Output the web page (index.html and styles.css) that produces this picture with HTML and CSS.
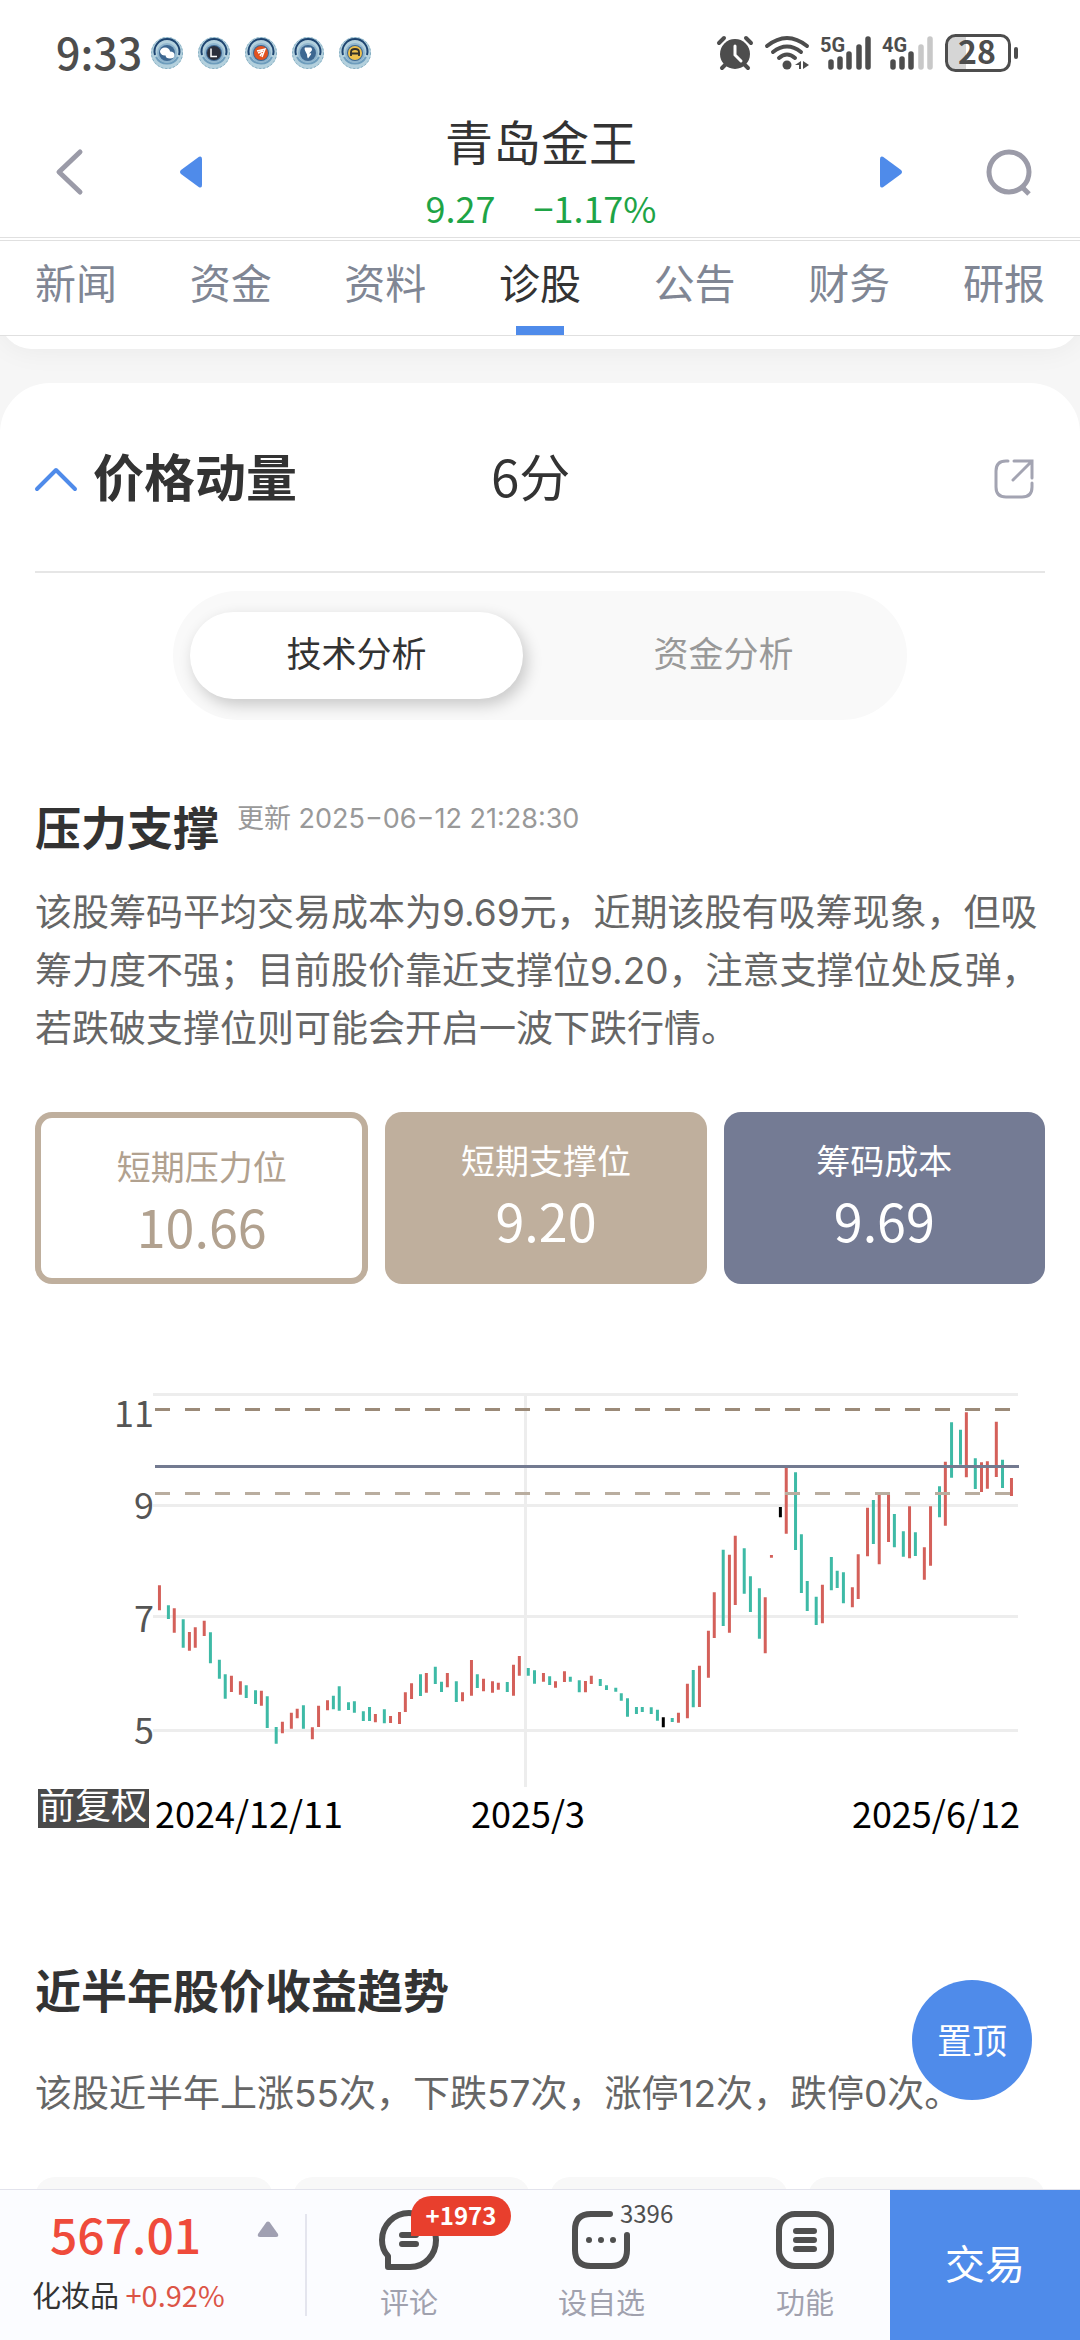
FILE: index.html
```html
<!DOCTYPE html>
<html lang="zh-CN">
<head>
    <meta charset="UTF-8">
    <meta name="viewport" content="width=device-width, initial-scale=1.0">
    <title>青岛金王 - 诊股</title>
    <link rel="stylesheet" href="styles.css">
</head>
<body>

    <div class="status-bar">
        <span class="clock">9:33</span>
        <div class="notices">
            <svg class="notice" viewBox="0 0 34 34"><use href="#ring"/><ellipse cx="15" cy="15.500" rx="5" ry="4" fill="#fff"/><ellipse cx="20" cy="19" rx="4.500" ry="3.500" fill="#fff"/></svg>
            <svg class="notice" viewBox="0 0 34 34"><use href="#ring"/><circle cx="17" cy="17" r="7" fill="#2c2f3c"/><path d="M14 12.500V20.500H20" fill="none" stroke="#fff" stroke-width="1.500"/></svg>
            <svg class="notice" viewBox="0 0 34 34"><use href="#ring"/><circle cx="17" cy="17" r="7" fill="#e2521f"/><path d="M13 15L21 13L18 21M14 17L19 15M16 20L18 17" fill="none" stroke="#fff" stroke-width="1.500"/></svg>
            <svg class="notice" viewBox="0 0 34 34"><use href="#ring"/><path d="M14 11.500h6q2 2 0 4l-2 2q3-1 2 1l-3 4q-1-1-1-4l-2-4q-1-2 0-3z" fill="#fff"/></svg>
            <svg class="notice" viewBox="0 0 34 34"><use href="#ring"/><circle cx="17" cy="17" r="7" fill="#efc04c"/><path d="M13 20v-4q0-3 4-3t4 3v4M12 17.500h10" fill="none" stroke="#33302a" stroke-width="1.800"/></svg>
        </div>
        <div class="signals">
            <svg width="36" height="34" viewBox="0 0 36 34">
                <circle cx="18" cy="18" r="15" fill="#4d4d4d"/>
                <path d="M2 7L7 2M34 7L29 2M8 29L5 32M28 29L31 32" stroke="#4d4d4d" stroke-width="4" stroke-linecap="round"/>
                <path d="M18 10V19L24 25" fill="none" stroke="#fff" stroke-width="3" stroke-linecap="round"/>
            </svg>
            <svg width="44" height="34" viewBox="0 0 44 34">
                <g fill="none" stroke="#4d4d4d" stroke-width="4" stroke-linecap="round">
                    <path d="M2 10Q22-6 42 10M8 16Q22 5 36 16M14 22Q22 15 30 22"/>
                </g>
                <circle cx="22" cy="29" r="4.500" fill="#4d4d4d"/>
                <path d="M30 29L36 25V33H34V29ZM38 25L44 29L38 33Z" fill="#4d4d4d"/>
            </svg>
            <svg width="50" height="34" viewBox="0 0 50 34">
                <text x="-1" y="16" class="net">5G</text>
                <path d="M10 26V31M19 23V31M28 18V31M38 11V31M47 3V31" stroke="#4d4d4d" stroke-width="5.500" stroke-linecap="round"/>
            </svg>
            <svg width="50" height="34" viewBox="0 0 50 34">
                <text x="-1" y="16" class="net">4G</text>
                <path d="M10 26V31M19 23V31M28 18V31" stroke="#4d4d4d" stroke-width="5.500" stroke-linecap="round"/>
                <path d="M38 11V31M47 3V31" stroke="#c8c8c8" stroke-width="5.500" stroke-linecap="round"/>
            </svg>
            <svg width="74" height="38" viewBox="0 0 74 38">
                <path d="M10 2H21V36H10Q2 36 2 28V10Q2 2 10 2Z" fill="#d6d6d6"/>
                <rect x="1.500" y="1.500" width="63" height="35" rx="9" fill="none" stroke="#4d4d4d" stroke-width="3"/>
                <path d="M71 15V23" stroke="#4d4d4d" stroke-width="4" stroke-linecap="round"/>
                <text x="32" y="30" class="battery">28</text>
            </svg>
        </div>
    </div>

    <header class="stock-head">
        <button class="icon-btn back" aria-label="返回">
            <svg width="28" height="46" viewBox="0 0 28 46"><path d="M24 3L3 23L24 43" fill="none" stroke="#9b9ba8" stroke-width="5" stroke-linecap="round" stroke-linejoin="round"/></svg>
        </button>
        <button class="icon-btn" aria-label="上一只">
            <svg width="22" height="32" viewBox="0 0 22 32"><path d="M1 14L19 .8Q22-.5 22 3V29Q22 32.500 19 31.200L1 18Q-1 16 1 14Z" fill="#4f8bea"/></svg>
        </button>
        <div class="stock">
            <h1>青岛金王</h1>
            <p class="quote"><span>9.27</span><span>−1.17%</span></p>
        </div>
        <button class="icon-btn" aria-label="下一只">
            <svg width="22" height="32" viewBox="0 0 22 32"><path d="M21 14L3 .8Q0-.5 0 3V29Q0 32.500 3 31.200L21 18Q23 16 21 14Z" fill="#4f8bea"/></svg>
        </button>
        <button class="icon-btn search" aria-label="搜索">
            <svg width="46" height="46" viewBox="0 0 46 46"><path d="M35.500 37.500L43 45" stroke="#9b9ba8" stroke-width="5"/><circle cx="23" cy="23" r="20" fill="none" stroke="#9b9ba8" stroke-width="5"/></svg>
        </button>
    </header>

    <nav class="tabs">
        <a href="#">新闻</a>
        <a href="#">资金</a>
        <a href="#">资料</a>
        <a href="#" class="active">诊股</a>
        <a href="#">公告</a>
        <a href="#">财务</a>
        <a href="#">研报</a>
    </nav>

    <main>
        <div class="prev-card"></div>
        <section class="card">
            <div class="card-head">
                <svg width="42" height="24" viewBox="0 0 42 24"><path d="M2 22L21 3L40 22" fill="none" stroke="#4f8bea" stroke-width="4" stroke-linecap="round" stroke-linejoin="round"/></svg>
                <h2>价格动量</h2>
                <span class="score">6分</span>
                <button class="icon-btn" aria-label="分享">
                    <svg width="40" height="40" viewBox="0 0 40 40"><path d="M14 2H12Q2 2 2 12V28Q2 38 12 38H28Q38 38 38 28V24M20 2H38V19M38 2L19 21" fill="none" stroke="#a3a4b2" stroke-width="3" stroke-linecap="round"/></svg>
                </button>
            </div>

            <div class="switch">
                <button class="on">技术分析</button>
                <button>资金分析</button>
            </div>

            <div class="section-title">
                <h3>压力支撑</h3>
                <span class="updated">更新 2025−06−12 21:28:30</span>
            </div>
            <p class="desc">该股筹码平均交易成本为9.69元，近期该股有吸筹现象，但吸筹力度不强；目前股价靠近支撑位9.20，注意支撑位处反弹，若跌破支撑位则可能会开启一波下跌行情。</p>

            <div class="levels">
                <div class="level pressure"><span>短期压力位</span><b>10.66</b></div>
                <div class="level support"><span>短期支撑位</span><b>9.20</b></div>
                <div class="level cost"><span>筹码成本</span><b>9.69</b></div>
            </div>

            <svg class="chart" viewBox="0 0 1080 513">
                <g stroke="#ededed" stroke-width="3">
                    <path d="M153 24.500H1018M153 135.500H1018M153 246.500H1018M153 360.500H1018M525.500 24V417"/>
                </g>
                <!-- daily high/low bars -->
                <g transform="scale(.34439 .33333)" stroke-width="8.700">
                    <path class="down" d="M489 706V747M532 748V833M611 787V880M637 869V926M654 913V986M715 946V984M742 961V1002M776 979V1074M802 1071V1121M881 1006V1076M968 977V1018M985 949V1022M1012 997V1020M1029 994V1028M1055 1024V1053M1073 1011V1053M1116 1018V1060M1221 913V978M1264 890V942M1282 935V966M1325 934V996M1386 913V954M1473 936V966M1534 894V917M1552 901V941M1596 919V945M1656 920V935M1682 931V967M1743 927V948M1761 946V960M1788 953V965M1804 970V992M1822 985V1040M1848 1011V1032M1865 1011V1026M1891 1012V1032M1909 1019V1052M1952 1044V1056M2013 900V1012M2100 539V768M2161 535V671M2179 619V726M2205 655V806M2310 307V540M2327 493V669M2344 633V723M2370 680V765M2414 561V661M2431 602V654M2449 607V700M2536 390V522M2597 432V532M2623 484V560M2658 487V558M2728 349V442M2763 157V323M2789 179V284M2832 265V357M2911 269V354"/>
                    <path class="up" d="M463 646V721M506 715V788M550 786V842M567 772V833M593 752V798M672 917V966M698 934V974M759 962V1007M820 1055V1090M846 1028V1076M863 1016V1045M907 1072V1108M925 1007V1071M951 991V1021M1090 1032V1057M1134 1038V1059M1160 1026V1062M1177 967V1026M1195 940V987M1238 909V968M1299 909V952M1343 967V994M1369 870V977M1404 926V964M1430 934V968M1447 938V959M1491 884V977M1508 858V917M1578 909V935M1613 934V953M1639 904V936M1700 933V967M1717 917V942M1970 1028V1058M1996 941V1045M2031 887V1011M2057 782V923M2074 667V804M2118 554V788M2135 497V705M2222 682V850M2240 555V563M2283 294V491M2388 644V760M2475 652V712M2492 553V687M2519 413V559M2553 374V583M2580 372V516M2641 409V565M2684 532V629M2702 409V587M2745 275V467M2806 127V322M2850 277V366M2867 274V356M2893 155V321M2937 324V378"/>
                    <path class="flat" d="M1926 1042V1072M2266 411V442"/>
                </g>
                <path d="M155 39.500H1019" stroke="#9b8a78" stroke-width="3" stroke-dasharray="15 15"/>
                <path d="M155 123.500H1019" stroke="#b9ad9f" stroke-width="3" stroke-dasharray="15 15"/>
                <path d="M155 96.500H1019" stroke="#737a90" stroke-width="3"/>
                <g class="axis-y">
                    <text x="154" y="57">11</text>
                    <text x="154" y="149">9</text>
                    <text x="154" y="262">7</text>
                    <text x="154" y="374">5</text>
                </g>
                <g class="axis-x">
                    <text x="155" y="458">2024/12/11</text>
                    <text x="528" y="458" text-anchor="middle">2025/3</text>
                    <text x="1020" y="458" text-anchor="end">2025/6/12</text>
                </g>
                <rect x="38" y="419" width="111" height="39" fill="#4a4a4a"/>
                <text x="39" y="449" class="adjust">前复权</text>
            </svg>

            <div class="section-title">
                <h3>近半年股价收益趋势</h3>
            </div>
            <p class="desc trend">该股近半年上涨55次，下跌57次，涨停12次，跌停0次。</p>
            <div class="stats"><i></i><i></i><i></i><i></i></div>
        </section>
        <button class="to-top">置顶</button>
    </main>

    <footer class="bottom-bar">
        <div class="sector">
            <div class="sector-index">567.01
                <svg width="22" height="16" viewBox="0 0 22 16"><path d="M9.500 1Q11 0 12.500 1L21 13Q22 16 19 16H3Q0 16 1 13Z" fill="#a0a0b2"/></svg>
            </div>
            <div class="sector-name">化妆品 <span>+0.92%</span></div>
        </div>
        <div class="actions">
            <button>
                <svg width="60" height="60" viewBox="0 0 60 60"><path d="M9 57H31C46 57 57 45 57 30C57 15 45 3 30 3S3 15 3 30C3 37 6 43 9 46Z" fill="none" stroke="#4f4f4f" stroke-width="6" stroke-linejoin="round"/><path d="M23 25H37M23 34H37" stroke="#4f4f4f" stroke-width="6" stroke-linecap="round"/></svg>
                评论
                <span class="badge">+1973</span>
            </button>
            <button class="watch">
                <svg width="58" height="60" viewBox="0 0 58 60"><path d="M38 4H19Q3 4 3 20V40Q3 56 19 56H39Q55 56 55 40V25" fill="none" stroke="#4f4f4f" stroke-width="6" stroke-linecap="round"/><g fill="#4f4f4f"><circle cx="17" cy="30" r="3"/><circle cx="29" cy="30" r="3"/><circle cx="41" cy="30" r="3"/></g></svg>
                设自选
                <span class="count">3396</span>
            </button>
            <button>
                <svg width="58" height="60" viewBox="0 0 58 60"><rect x="3" y="4" width="52" height="52" rx="16" fill="none" stroke="#4f4f4f" stroke-width="6"/><path d="M20 21H38M20 30H38M20 39H38" stroke="#4f4f4f" stroke-width="6" stroke-linecap="round"/></svg>
                功能
            </button>
        </div>
        <button class="trade">交易</button>
    </footer>

    <!-- shared ring for the notification icons -->
    <svg class="defs">
        <symbol id="ring" viewBox="0 0 34 34">
            <circle cx="17" cy="17" r="16" fill="#b3d0dd"/>
            <circle cx="17" cy="17" r="15.500" fill="none" stroke="#83adc2" stroke-width="1" stroke-dasharray="2 2"/>
            <path d="M5 19A12.500 12.500 0 1 1 29 19" fill="none" stroke="#1d4470" stroke-width="2"/>
            <path d="M6 21A12.500 12.500 0 0 0 28 21" fill="none" stroke="#6d9cbc" stroke-width="2"/>
            <circle cx="17" cy="17" r="10" fill="#8fb5ce"/>
            <circle cx="17" cy="17" r="8" fill="#3d6791"/>
        </symbol>
    </svg>

</body>
</html>
```

FILE: styles.css
```css
* {
    box-sizing: border-box;
    margin: 0;
    padding: 0;
}
body {
    height: 100vh;
    display: flex;
    flex-direction: column;
    overflow: hidden;
    background: #fff;
    color: #333;
    font-family: "Noto Sans CJK SC", sans-serif;
}
button {
    border: none;
    background: none;
    font-family: inherit;
    color: inherit;
    cursor: pointer;
}
a {
    color: inherit;
    text-decoration: none;
}
svg {
    display: block;
    overflow: visible;
}
.defs {
    position: absolute;
    width: 0;
    height: 0;
}

/* status bar */
.status-bar {
    display: flex;
    align-items: center;
    height: 106px;
    padding: 0 61px 0 56px;
    color: #4d4d4d;
}
.clock {
    font-size: 43px;
    font-weight: 500;
    line-height: 64px;
    width: 94px;
    padding-bottom: 4px;
}
.notices {
    display: flex;
    gap: 13px;
}
.notice {
    width: 34px;
    height: 34px;
}
.signals {
    display: flex;
    align-items: center;
    gap: 12px;
    margin-left: auto;
}
.net {
    font-family: Roboto, sans-serif;
    font-size: 20px;
    font-weight: 700;
    fill: #4d4d4d;
}
.battery {
    font-size: 32px;
    font-weight: 700;
    text-anchor: middle;
    fill: #4d4d4d;
}

/* stock header */
.stock-head {
    display: flex;
    align-items: center;
    height: 132px;
    padding: 0 48px 0 56px;
    border-bottom: 1px solid #e0e0e0;
}
.icon-btn {
    flex: none;
}
.back {
    margin-right: 96px;
}
.search {
    margin-left: 84px;
}
.stock {
    flex: 1;
    padding-bottom: 6px;
    text-align: center;
}
.stock h1 {
    font-size: 48px;
    font-weight: 400;
    line-height: 76px;
}
.quote {
    display: flex;
    justify-content: center;
    gap: 38px;
    font-size: 36px;
    line-height: 58px;
    color: #1ea446;
}

/* tabs */
.tabs {
    display: flex;
    justify-content: space-between;
    height: 96px;
    margin-top: 2px;
    padding: 0 35px;
    border-top: 1px solid #e0e0e0;
    border-bottom: 1px solid #e0e0e0;
    font-size: 41px;
    line-height: 80px;
    color: #808694;
}
.tabs .active {
    color: #333;
    background: linear-gradient(#4f8bea, #4f8bea) center bottom / 48px 9px no-repeat;
}

/* content */
main {
    flex: 1;
    position: relative;
    overflow: hidden;
    background: #f6f6f6;
}
.prev-card {
    height: 63px;
    margin-top: -50px;
    margin-bottom: 34px;
    background: #fff;
    border-radius: 50px;
    box-shadow: 0 0 30px rgba(0, 0, 0, 0.06);
}
.card {
    padding: 0 35px;
    background: #fff;
    border-radius: 50px 50px 0 0;
}
.card-head {
    display: grid;
    grid-template-columns: 58px 398px 1fr auto;
    align-items: center;
    height: 190px;
    padding: 4px 11px 0 0;
    border-bottom: 2px solid #e6e6e6;
}
.card-head h2,
.score {
    padding-bottom: 9px;
    font-size: 51px;
    line-height: 60px;
}
.switch {
    display: flex;
    gap: 34px;
    width: 734px;
    margin: 18px auto 0;
    padding: 21px 17px;
    border-radius: 65px;
    background: #f9f9f9;
}
.switch button {
    flex: 1;
    height: 87px;
    padding-bottom: 8px;
    border-radius: 44px;
    font-size: 35px;
    color: #999;
}
.switch .on {
    flex: 0 0 333px;
    background: #fff;
    color: #333;
    box-shadow: 4px 6px 16px rgba(0, 0, 0, 0.2);
}
.section-title {
    display: flex;
    gap: 18px;
    margin-top: 78px;
}
.section-title h3 {
    font-size: 46px;
    line-height: 54px;
}
.updated {
    font-family: Inter, "Noto Sans CJK SC", sans-serif;
    font-size: 27px;
    line-height: 42px;
    color: #999;
}
.desc {
    margin-top: 32px;
    font-family: Inter, "Noto Sans CJK SC", sans-serif;
    font-size: 37px;
    line-height: 58px;
    color: #666;
}
.trend {
    margin-top: 50px;
}
.levels {
    display: flex;
    gap: 17px;
    margin-top: 54px;
}
.level {
    box-sizing: content-box;
    flex: 1;
    display: flex;
    flex-direction: column;
    align-items: center;
    padding: 23px 0 17px;
    border-radius: 17px;
    color: #fff;
}
.level span {
    font-size: 34px;
    line-height: 50px;
}
.level b {
    font-size: 52px;
    font-weight: 400;
    line-height: 70px;
}
.pressure {
    border: 6px solid #bfaf9d;
    color: #b1a18f;
}
.support {
    background: #bfaf9d;
}
.cost {
    background: #747b94;
}

/* chart */
.chart {
    width: calc(100% + 70px);
    margin: 86px -35px 0;
}
.down {
    stroke: #3ebaa6;
}
.up {
    stroke: #d4605a;
}
.flat {
    stroke: #000;
}
.axis-y {
    font-size: 36px;
    text-anchor: end;
    fill: #555;
}
.axis-x {
    font-size: 36px;
    fill: #000;
}
.adjust {
    font-size: 36px;
    fill: #fff;
}

.stats {
    display: grid;
    grid-template-columns: repeat(4, 1fr);
    gap: 20px;
    margin-top: 54px;
}
.stats i {
    height: 130px;
    border-radius: 20px;
    background: #f8f8f8;
}
.to-top {
    position: absolute;
    right: 48px;
    bottom: 89px;
    width: 120px;
    height: 120px;
    padding-bottom: 4px;
    border-radius: 50%;
    background: #4f8bea;
    color: #fff;
    font-size: 35px;
}

/* bottom bar */
.bottom-bar {
    display: flex;
    height: 151px;
    border-top: 1px solid #e2e3ec;
    background: #fbfcff;
}
.sector {
    width: 307px;
    padding: 11px 0 0 32px;
    background: linear-gradient(#e4e5ee, #e4e5ee) right 24px / 2px 102px no-repeat;
}
.sector-index {
    display: flex;
    align-items: center;
    justify-content: space-between;
    padding: 0 28px 0 18px;
    font-size: 48px;
    font-weight: 500;
    line-height: 64px;
    color: #ef4b3b;
}
.sector-index svg {
    margin-bottom: 8px;
}
.sector-name {
    font-size: 29px;
    line-height: 58px;
}
.sector-name span {
    color: #dc5446;
}
.actions {
    flex: 1;
    display: flex;
    justify-content: space-between;
    padding: 0 56px 0 72px;
}
.actions button {
    position: relative;
    display: flex;
    flex-direction: column;
    align-items: center;
    padding-top: 20px;
    font-size: 29px;
    line-height: 62px;
    color: #a0a1ae;
}
.actions .watch {
    padding-right: 12px;
}
.badge {
    position: absolute;
    top: 6px;
    left: 32px;
    width: 100px;
    height: 40px;
    border-radius: 20px 20px 20px 0;
    background: #e83f2d;
    color: #fff;
    font-size: 24px;
    font-weight: 700;
    line-height: 38px;
}
.count {
    position: absolute;
    top: 8px;
    left: 62px;
    font-size: 24px;
    line-height: 30px;
    color: #4f4f4f;
}
.trade {
    width: 190px;
    padding-bottom: 6px;
    background: #4f8bea;
    color: #fff;
    font-size: 40px;
}
```
